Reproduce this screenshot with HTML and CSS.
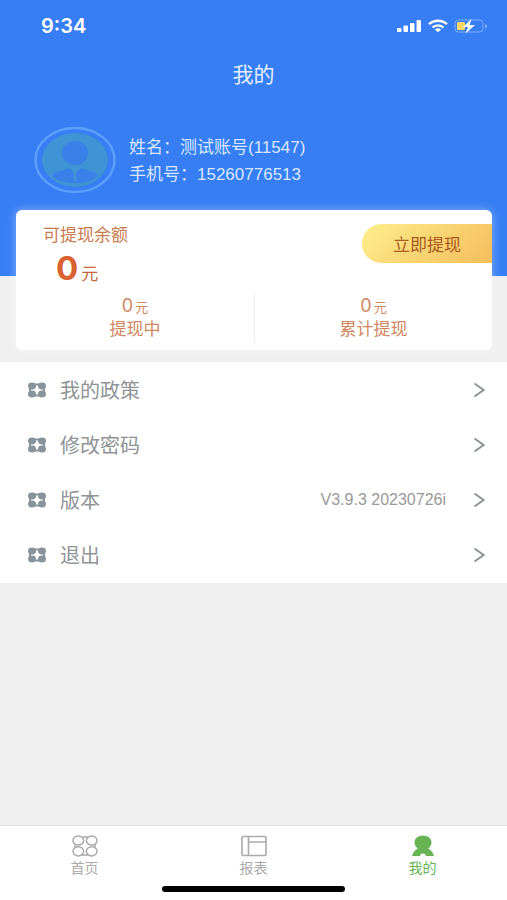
FILE: index.html
```html
<!DOCTYPE html>
<html lang="zh-CN">
<head>
    <meta charset="UTF-8">
    <meta name="viewport" content="width=device-width, initial-scale=1.0">
    <title>我的</title>
    <link rel="stylesheet" href="styles.css">
</head>
<body>

<svg class="sprite" aria-hidden="true">
    <symbol id="clover" viewBox="0 0 20 18">
        <path d="M3 3.500h14v11H3z" fill="none" stroke="currentColor" stroke-width="2"/>
        <g fill="currentColor">
            <ellipse cx="5" cy="5" rx="4" ry="3.4"/>
            <ellipse cx="15" cy="5" rx="4" ry="3.4"/>
            <ellipse cx="5" cy="13" rx="4" ry="3.4"/>
            <ellipse cx="15" cy="13" rx="4" ry="3.4"/>
        </g>
    </symbol>
    <symbol id="arrow" viewBox="0 0 12 16">
        <path d="M1.500 1.500L10.500 8l-9 6.500" fill="none" stroke="currentColor" stroke-width="2"/>
    </symbol>
</svg>

<header class="header">
    <div class="status">
        <span class="time">9:34</span>
        <div class="status-icons">
            <svg width="25" height="14" viewBox="0 0 25 14" fill="#fff">
                <rect x="0" y="9" width="4.5" height="4" rx="1"/>
                <rect x="6.5" y="6.5" width="4.5" height="6.5" rx="1"/>
                <rect x="13" y="4" width="4.5" height="9" rx="1"/>
                <rect x="19.5" y="1" width="4.5" height="12" rx="1"/>
            </svg>
            <svg width="20" height="14" viewBox="0 0 20 14" fill="none" stroke="#fff" stroke-width="2.4">
                <path d="M1 5.2c5-4.700 13-4.700 18 0"/>
                <path d="M4.500 8.500c3-2.900 8-2.900 11 0"/>
                <path d="M6.900 10.400c1.800-1.600 4.400-1.600 6.200 0L10 13.300z" fill="#fff" stroke="none"/>
            </svg>
            <svg width="34" height="16" viewBox="0 0 34 16">
                <rect x="1" y="2" width="28" height="12" rx="3.5" fill="none" stroke="#7fb0f8"/>
                <path d="M31 6v4.500c1.500-.5 2-1.300 2-2.200S32.500 6.500 31 6z" fill="#7fb0f8"/>
                <rect x="3" y="4" width="8" height="8" rx="1" fill="#fad766"/>
                <path d="M17.500 1L9 9h5l-2.500 6.500L21 7h-5.500z" fill="#fff"/>
            </svg>
        </div>
    </div>
    <h1 class="title">我的</h1>
    <div class="profile">
        <svg class="avatar" viewBox="0 0 82 68">
            <ellipse cx="41" cy="34" rx="39.5" ry="32" fill="none" stroke="#5ba0fb" stroke-width="2.5"/>
            <ellipse cx="41" cy="34" rx="33" ry="27" fill="#4093d5"/>
            <ellipse cx="41" cy="27" rx="13" ry="12" fill="#3980e8"/>
            <path d="M18 50c2-4 6-5 11-6l6-2 6 6 6-6 6 2c5 1 9 2 11 6-6 5-14 7-23 7s-17-2-23-7z" fill="#3980e8"/>
            <path d="M39 46h4l-1 3 1 4-2 3-2-3 1-4z" fill="#4093d5"/>
        </svg>
        <div class="profile-info">
            <p>姓名：测试账号(11547)</p>
            <p>手机号：15260776513</p>
        </div>
    </div>
</header>

<main class="main">
    <section class="card">
        <div class="card-top">
            <div class="balance">
                <p class="balance-label">可提现余额</p>
                <p class="balance-value"><strong>0</strong>元</p>
            </div>
            <button class="withdraw" type="button">立即提现</button>
        </div>
        <div class="stats">
            <div class="stat">
                <p class="stat-value"><span>0</span>元</p>
                <p>提现中</p>
            </div>
            <div class="stat">
                <p class="stat-value"><span>0</span>元</p>
                <p>累计提现</p>
            </div>
        </div>
    </section>

    <nav class="menu">
        <a href="#">
            <svg class="menu-icon"><use href="#clover"/></svg>
            <span class="menu-name">我的政策</span>
            <svg class="menu-arrow"><use href="#arrow"/></svg>
        </a>
        <a href="#">
            <svg class="menu-icon"><use href="#clover"/></svg>
            <span class="menu-name">修改密码</span>
            <svg class="menu-arrow"><use href="#arrow"/></svg>
        </a>
        <a href="#">
            <svg class="menu-icon"><use href="#clover"/></svg>
            <span class="menu-name">版本</span>
            <span class="version">V3.9.3 20230726i</span>
            <svg class="menu-arrow"><use href="#arrow"/></svg>
        </a>
        <a href="#">
            <svg class="menu-icon"><use href="#clover"/></svg>
            <span class="menu-name">退出</span>
            <svg class="menu-arrow"><use href="#arrow"/></svg>
        </a>
    </nav>
</main>

<footer class="footer">
    <nav class="tabs">
        <a href="#">
            <svg width="28" height="24" viewBox="0 0 28 24" fill="none" stroke="currentColor" stroke-width="1.5">
                <ellipse cx="7.3" cy="6.5" rx="5.3" ry="4.6"/>
                <ellipse cx="20.7" cy="6.5" rx="5.3" ry="4.6"/>
                <ellipse cx="7.3" cy="17.3" rx="5.3" ry="4.6"/>
                <ellipse cx="20.7" cy="17.3" rx="5.3" ry="4.6"/>
                <path d="M10.500 3h7M10.500 21h7M4 10.500v3M24 10.500v3"/>
            </svg>
            <span>首页</span>
        </a>
        <a href="#">
            <svg width="28" height="24" viewBox="0 0 28 24" fill="none" stroke="currentColor" stroke-width="1.6">
                <rect x="2" y="2.5" width="24" height="19" rx="1"/>
                <path d="M8.500 2.500v19M8.500 8H26"/>
            </svg>
            <span>报表</span>
        </a>
        <a href="#" class="active">
            <svg width="28" height="24" viewBox="0 0 28 24" fill="currentColor">
                <path d="M14 1.500c-5 0-8.500 3-8.500 7 0 2.800 1.500 4.800 3.500 6-3 1.500-5 4-6 7.500h8c.3-1.700 1.400-2.500 3-2.500s2.700.8 3 2.500h8c-1-3.500-3-6-6-7.500 2-1.200 3.500-3.200 3.500-6 0-4-3.500-7-8.500-7z"/>
            </svg>
            <span>我的</span>
        </a>
    </nav>
    <div class="home-bar"></div>
</footer>

</body>
</html>
```
FILE: styles.css
```css
* {
    box-sizing: border-box;
}
body {
    font-family: "Liberation Sans", "Noto Sans CJK SC", sans-serif;
    display: flex;
    flex-direction: column;
    min-height: 100vh;
    margin: 0;
    background-color: #f0f0f0;
}
h1,
p {
    margin: 0;
    font-weight: normal;
}
a {
    color: inherit;
    text-decoration: none;
}
svg {
    display: block;
    flex-shrink: 0;
}
.sprite {
    display: none;
}
.header {
    background: #377ef5;
    color: #fff;
    padding: 14px 0 82px;
}
.status {
    display: flex;
    justify-content: space-between;
    align-items: center;
    height: 24px;
    padding: 0 19px 0 41px;
}
.time {
    font-family: Inter, sans-serif;
    font-size: 20px;
    font-weight: 600;
}
.status-icons {
    display: flex;
    align-items: center;
    gap: 6px;
}
.title {
    margin-top: 22px;
    font-size: 21px;
    line-height: 30px;
    text-align: center;
    color: #e2efff;
}
.profile {
    display: flex;
    align-items: center;
    gap: 13px;
    margin-top: 36px;
    padding-left: 34px;
}
.avatar {
    width: 82px;
    height: 68px;
}
.profile-info {
    padding-top: 2px;
    font-size: 17px;
    line-height: 27px;
    color: #d5e8ff;
}
.main {
    flex: 1;
}
.card {
    position: relative;
    margin: -66px 15px 12px 16px;
    padding: 14px 0 8px;
    background: #fff;
    border-radius: 6px;
    box-shadow: 0 0 10px rgba(255, 255, 255, 0.4);
    color: #d0875f;
}
.card-top {
    display: flex;
    justify-content: space-between;
    align-items: flex-start;
}
.balance {
    padding-left: 27px;
}
.balance-label {
    font-size: 17px;
    line-height: 24px;
    color: #c97b50;
}
.balance-value {
    padding-left: 13px;
    font-size: 17px;
    line-height: 20px;
    color: #c8693a;
}
.balance-value strong {
    margin-right: 3px;
    font-family: Inter, sans-serif;
    font-size: 33px;
    line-height: 40px;
    color: #d9622f;
}
.withdraw {
    width: 130px;
    height: 39px;
    padding: 0;
    border: none;
    border-radius: 20px 0 0 20px;
    background: linear-gradient(135deg, #fdee8c, #f5bd5b);
    font-family: inherit;
    font-size: 17px;
    color: #a95a1c;
    cursor: pointer;
}
.stats {
    display: grid;
    grid-template-columns: 1fr 1fr;
    margin-top: 6px;
}
.stat {
    font-size: 17px;
    line-height: 24px;
    text-align: center;
}
.stat + .stat {
    border-left: 1px solid #eee;
}
.stat-value {
    font-size: 13px;
    line-height: 20px;
}
.stat-value span {
    margin-right: 2px;
    font-family: Inter, sans-serif;
    font-size: 18px;
    line-height: 24px;
}
.menu {
    padding-bottom: 1px;
    background: #fff;
}
.menu a {
    display: flex;
    align-items: center;
    height: 55px;
    padding: 0 22px 0 27px;
    color: #8f9496;
}
.menu-icon {
    width: 20px;
    height: 18px;
    color: #87949b;
}
.menu-name {
    flex: 1;
    margin-left: 13px;
    font-size: 20px;
}
.version {
    margin-right: 27px;
    font-size: 16px;
    color: #999;
}
.menu-arrow {
    width: 12px;
    height: 16px;
}
.footer {
    padding: 8px 0;
    background: #fff;
    border-top: 1px solid #e2e2e2;
}
.tabs {
    display: flex;
    justify-content: space-around;
}
.tabs a {
    display: flex;
    flex: 1;
    flex-direction: column;
    align-items: center;
    font-size: 14px;
    line-height: 20px;
    color: #aaa;
}
.tabs .active {
    color: #68b455;
}
.home-bar {
    width: 36%;
    height: 6px;
    margin: 8px auto 0;
    border-radius: 3px;
    background: #000;
}
```
